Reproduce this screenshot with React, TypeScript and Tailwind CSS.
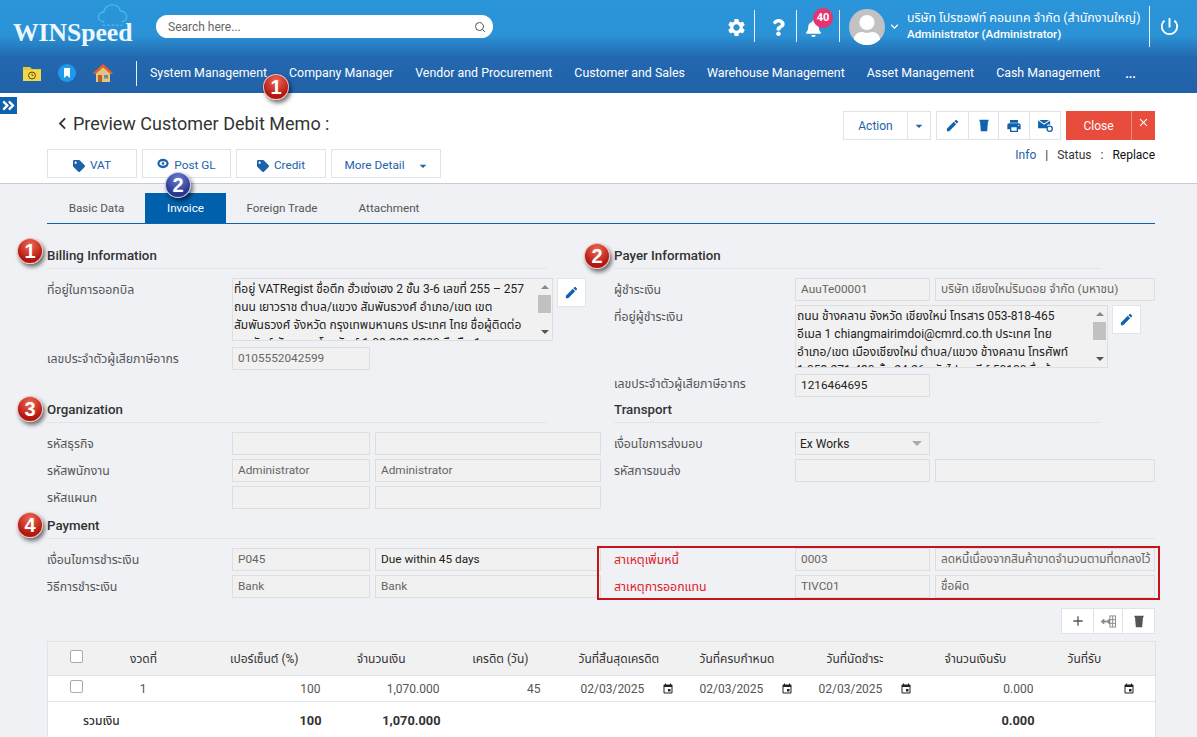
import { MdSettings, MdEdit, MdPrint, MdEvent, MdPowerSettingsNew, MdArrowDropDown, MdClose, MdAdd, MdExpandMore, MdChevronLeft } from "react-icons/md";
import { FaBell, FaQuestion, FaAngleDoubleRight, FaUser, FaTag } from "react-icons/fa";
import { Search } from "lucide-react";

const NAV = ["System Management", "Company Manager", "Vendor and Procurement", "Customer and Sales", "Warehouse Management", "Asset Management", "Cash Management"];

const ADDRESS_1 = [
  "ที่อยู่ VATRegist ชื่อตึก ฮั่วเซ่งเฮง 2 ชั้น 3-6 เลขที่ 255 – 257",
  "ถนน เยาวราช ตำบล/แขวง สัมพันธวงศ์ อำเภอ/เขต เขต",
  "สัมพันธวงศ์ จังหวัด กรุงเทพมหานคร ประเทศ ไทย ชื่อผู้ติดต่อ",
  "คุณรัตน์ สัญชาญ โทรศัพท์ 1-02-223-3200 มือถือ 1",
];
const ADDRESS_2 = [
  "ถนน ช้างคลาน จังหวัด เชียงใหม่ โทรสาร 053-818-465",
  "อีเมล 1 chiangmairimdoi@cmrd.co.th ประเทศ ไทย",
  "อำเภอ/เขต เมืองเชียงใหม่ ตำบล/แขวง ช้างคลาน โทรศัพท์",
  "1-053-271-430 ชั้น 24-26 รหัสไปรษณีย์ 50100 ชื่อผู้",
];

function Badge({ n, blue, className }: { n: number; blue?: boolean; className: string }) {
  return (
    <span
      className={`absolute z-20 flex h-[26px] w-[26px] items-center justify-center rounded-full border-[1.5px] border-white/70 text-[20px] leading-none font-bold text-white shadow-[2px_3px_4px_rgba(0,0,0,0.55)] font-['Liberation_Sans',sans-serif] ${
        blue
          ? "bg-[radial-gradient(circle_at_50%_25%,#6f7fd0,#27368f_70%)]"
          : "bg-[radial-gradient(circle_at_50%_25%,#ee6a55,#b3160f_70%)]"
      } ${className}`}
    >
      {n}
    </span>
  );
}

function Field({ value, dark, className = "" }: { value?: string; dark?: boolean; className?: string }) {
  return (
    <div className={`flex h-[23px] items-center overflow-hidden whitespace-nowrap border border-[#dcdfe0] bg-[#f1f1f1] px-[5px] text-[11.8px] ${dark ? "text-[#222]" : "text-[#666]"} ${className}`}>
      {value}
    </div>
  );
}

function Title({ text, className = "" }: { text: string; className?: string }) {
  return (
    <div className={`flex h-[25px] items-center border-b border-[#e2e4e8] pb-[1px] text-[13.3px] font-medium text-[#333] ${className}`}>
      {text}
    </div>
  );
}

function Label({ text, red }: { text: string; red?: boolean }) {
  return <div className={`pt-[2px] text-[12.3px] leading-[21px] ${red ? "text-[#e0202a]" : "text-[#555]"}`}>{text}</div>;
}

function TrashIcon({ className }: { className: string }) {
  return (
    <svg viewBox="0 0 12 15" className={className} fill="currentColor">
      <path d="M0.500 0.500 H11.500 V2.500 H10.800 L9.800 14.500 H2.200 L1.200 2.500 H0.500Z" />
    </svg>
  );
}

function AddressBox({ lines, width }: { lines: string[]; width: string }) {
  return (
    <div className="flex gap-[4px]">
      <div className={`flex h-[63px] overflow-hidden border border-[#dcdfe0] bg-[#f1f1f1] ${width}`}>
        <div className="min-w-0 flex-1 overflow-hidden py-[1px] pl-[1px] text-[12px] leading-[18px] text-[#222]">
          {lines.map(line => <div key={line} className="whitespace-nowrap">{line}</div>)}
        </div>
        <div className="flex w-[15px] shrink-0 flex-col items-center justify-between bg-[#f1f1f1] py-[6px]">
          <span className="h-0 w-0 border-x-[4px] border-b-[4px] border-x-transparent border-b-[#888]" />
          <span className="mb-[12px] mt-[1px] h-[18px] w-[13px] bg-[#c1c1c1]" />
          <span className="h-0 w-0 border-x-[4px] border-t-[4px] border-x-transparent border-t-[#555]" />
        </div>
      </div>
      <button className="flex h-[29px] w-[29px] items-center justify-center border border-[#e2e4e8] bg-white text-[#0f62ac]">
        <MdEdit size={15} />
      </button>
    </div>
  );
}

function OutlineButton({ children, className = "" }: { children: React.ReactNode; className?: string }) {
  return (
    <button className={`flex h-[29px] items-center justify-center gap-[5px] border border-[#dfe2e6] bg-white pt-[5px] text-[11.8px] text-[#1b62a8] ${className}`}>
      {children}
    </button>
  );
}

function CalendarCell({ date, pl, iconGap }: { date?: string; pl: string; iconGap: string }) {
  return (
    <td className={pl}>
      <div className="flex items-center">
        <span className="w-[62px]">{date}</span>
        <MdEvent size={12} className={`text-[#222] ${iconGap}`} />
      </div>
    </td>
  );
}

export default function App() {
  return (
    <div className="relative h-[737px] w-[1197px] overflow-hidden bg-[#eff1f5] font-['Roboto','Noto_Sans','Noto_Sans_Thai',sans-serif] text-[#333]">
      <header className="h-[93px] bg-[linear-gradient(180deg,#2b95d9_0%,#2b92d6_38%,#2368af_62%,#2161a8_100%)] text-white">
        <div className="flex h-[56px]">
          {/* logo */}
          <div className="relative h-full w-[156px] shrink-0">
            <svg viewBox="0 0 34 26" className="absolute left-[96px] top-[4px] h-[23px] w-[33px]" fill="none" stroke="#48b6ee" strokeWidth="1.6">
              <path d="M8 20 C3 20 1 17 1 14 C1 11 4 9 7 9.500 C8 4 12 1 17 1 C22 1 25 4 26 8 C30 8 33 11 33 14.500 C33 18 30 20 27 20" />
              <path d="M6 24 H28" strokeDasharray="3 2" />
            </svg>
            <span className="absolute left-[13px] top-[18px] font-['Liberation_Serif',serif] text-[25.600px] leading-[30px] font-bold text-[#eef7fd]">WINSpeed</span>
          </div>
          <div className="mt-[15px] flex h-[23px] w-[337px] items-center justify-between rounded-full bg-white pl-[12px] pr-[7px]">
            <span className="text-[12px] text-[#666]">Search here...</span>
            <Search size={12} className="text-[#555]" />
          </div>
          <div className="ml-auto flex items-start">
            <MdSettings size={21} className="mt-[17px]" />
            <span className="ml-[7px] mt-[10px] h-[32px] w-px bg-white/90" />
            <FaQuestion size={17} className="ml-[15px] mt-[19px]" />
            <span className="ml-[9px] mt-[10px] h-[32px] w-px bg-white/90" />
            <div className="relative ml-[8px] mt-[20px]">
              <FaBell size={17} />
              <span className="absolute left-[8px] top-[-12px] flex h-[20px] w-[20px] items-center justify-center rounded-full bg-[#e8336f] text-[11px] font-bold">40</span>
            </div>
            <span className="ml-[17px] mt-[10px] h-[32px] w-px bg-white/90" />
            <div className="ml-[9px] mt-[9px] flex h-[36px] w-[36px] items-end justify-center overflow-hidden rounded-full bg-[#c2c2c2]">
              <FaUser size={30} className="text-white" />
            </div>
            <MdExpandMore size={15} className="ml-[2px] mt-[19px]" />
            <div className="ml-[5px] mt-[10px] w-[234px] whitespace-nowrap text-[12.400px] leading-[16px]">
              <div>บริษัท โปรซอฟท์ คอมเทค จำกัด (สำนักงานใหญ่)</div>
              <div className="text-[11.700px] font-medium">Administrator (Administrator)</div>
            </div>
            <span className="ml-[8px] mt-[6px] h-[41px] w-px bg-white/90" />
            <MdPowerSettingsNew size={23} className="ml-[8px] mt-[15px] mr-[16px]" />
          </div>
        </div>
        <nav className="flex h-[37px] items-center pb-[3px] pl-[23px] text-[12.380px]">
          <svg viewBox="0 0 18 16" className="h-[16px] w-[18px]">
            <path d="M0 2 H7 L9 4 H18 V16 H0Z" fill="#e8c93a" />
            <path d="M0 5 H18 V16 H0Z" fill="#f4d84a" />
            <circle cx="9" cy="10.500" r="3.500" fill="none" stroke="#5a4a10" strokeWidth="1" />
            <path d="M9 8.500 V10.500 H10.500" fill="none" stroke="#5a4a10" strokeWidth="0.8" />
          </svg>
          <svg viewBox="0 0 18 18" className="ml-[17px] h-[18px] w-[18px]">
            <circle cx="9" cy="9" r="9" fill="#1d9bea" />
            <path d="M6 4 H12 V14 L9 11.500 L6 14Z" fill="#fff" />
          </svg>
          <svg viewBox="0 0 20 20" className="ml-[17px] h-[20px] w-[20px]">
            <path d="M3 9 V19 H17 V9 L10 3Z" fill="#e9c27e" />
            <path d="M0 10 L10 1 L20 10 L18 11.500 L10 4.500 L2 11.500Z" fill="#e2622a" />
            <rect x="5" y="12" width="4" height="7" fill="#a8662c" />
            <rect x="11" y="12" width="4" height="3.500" fill="#5d8fb0" />
          </svg>
          <span className="ml-[23px] mr-[13px] h-[25px] w-px bg-white/90" />
          <div className="flex gap-[22px]">
            {NAV.map(item => <span key={item} className="whitespace-nowrap">{item}</span>)}
          </div>
          <span className="ml-[25px] pt-[3px] font-bold">...</span>
        </nav>
      </header>

      <Badge n={1} className="left-[263px] top-[74px]" />

      <section className="relative flex h-[91px] justify-between border-b border-[#c9cbce] bg-white pl-[47px] pr-[42px]">
        <button className="absolute left-0 top-[4px] flex h-[17px] w-[17px] items-center justify-center bg-[#0f62ac] text-white">
          <FaAngleDoubleRight size={15} />
        </button>
        <div>
          <div className="mt-[18px] flex h-[24px] items-center text-[#333]">
            <MdChevronLeft size={23} className="ml-[4px]" />
            <h1 className="ml-[-1px] text-[18px]">Preview Customer Debit Memo :</h1>
          </div>
          <div className="mt-[14px] flex gap-[5px]">
            <OutlineButton className="w-[90px]"><FaTag size={12} />VAT</OutlineButton>
            <OutlineButton className="w-[89px]">
              <svg viewBox="0 0 14 12" className="mb-[6px] h-[11px] w-[12px]">
                <ellipse cx="7" cy="6" rx="6.500" ry="5.500" fill="#1b62a8" />
                <ellipse cx="7" cy="6" rx="4" ry="2.500" fill="#fff" />
                <circle cx="7" cy="6" r="1.500" fill="#1b62a8" />
              </svg>
              Post GL
            </OutlineButton>
            <OutlineButton className="w-[90px]"><FaTag size={12} />Credit</OutlineButton>
            <OutlineButton className="w-[110px] gap-[10px] pl-[3px]">More Detail<MdArrowDropDown size={16} /></OutlineButton>
          </div>
        </div>
        <div className="flex flex-col items-end pt-[18px]">
          <div className="flex">
            <div className="flex h-[29px] border border-[#dfe2e6] bg-white text-[12px] text-[#1b62a8]">
              <span className="flex w-[64px] items-center justify-center border-r border-[#dfe2e6]">Action</span>
              <span className="flex w-[22px] items-center justify-center"><MdArrowDropDown size={16} /></span>
            </div>
            <div className="ml-[5px] flex h-[29px] border border-[#dfe2e6] bg-white text-[#0f62ac]">
              <span className="flex w-[32px] items-center justify-center border-r border-[#dfe2e6]"><MdEdit size={15} /></span>
              <span className="flex w-[30px] items-center justify-center border-r border-[#dfe2e6]"><TrashIcon className="h-[13px] w-[10px]" /></span>
              <span className="flex w-[31px] items-center justify-center border-r border-[#dfe2e6]"><MdPrint size={16} /></span>
              <span className="flex w-[30px] items-center justify-center">
                <svg viewBox="0 0 16 14" className="h-[13px] w-[15px]" fill="currentColor">
                  <path d="M0 1 H13 V6 H10 V10 H0Z" />
                  <path d="M0 1 L6.500 5.500 L13 1" fill="none" stroke="#fff" strokeWidth="1.200" />
                  <circle cx="12.500" cy="10.500" r="2.800" fill="none" stroke="currentColor" strokeWidth="1.400" />
                </svg>
              </span>
            </div>
            <button className="ml-[5px] flex h-[29px] bg-[#e74c3c] text-[12px] text-white">
              <span className="flex w-[66px] items-center justify-center border-r border-[#f08a7e]">Close</span>
              <span className="flex w-[23px] items-start justify-center pt-[5px]"><MdClose size={13} /></span>
            </button>
          </div>
          <div className="mt-[6px] flex items-center text-[12px] text-[#333]">
            <span className="text-[#1b62a8]">Info</span>
            <span className="mx-[9px]">|</span>
            <span>Status</span>
            <span className="mx-[9px]">:</span>
            <span className="text-[#111]">Replace</span>
          </div>
        </div>
      </section>

      <Badge n={2} blue className="left-[165px] top-[172px]" />

      <main className="pl-[47px] pr-[42px]">
        <div className="mt-[9px] flex h-[31px] border-b border-[#0f62ac] pt-[1px] text-[11.700px] text-[#555]">
          <span className="flex w-[98px] items-center justify-center pl-[1px]">Basic Data</span>
          <span className="mt-[-1px] flex w-[81px] items-center justify-center bg-[#0060ac] pt-[1px] text-white">Invoice</span>
          <span className="flex w-[112px] items-center justify-center">Foreign Trade</span>
          <span className="flex w-[102px] items-center justify-center">Attachment</span>
        </div>

        <div className="relative grid grid-cols-[567px_541px] pt-[20px]">
          <Badge n={1} className="left-[-30px] top-[14px]" />
          <Badge n={2} className="left-[537px] top-[19px]" />
          <Badge n={3} className="left-[-30px] top-[172px]" />
          <Badge n={4} className="left-[-30px] top-[288px]" />

          {/* billing */}
          <div className="h-[154px]">
            <Title text="Billing Information" className="w-[500px]" />
            <div className="mt-[9px] grid grid-cols-[185px_1fr] gap-y-[6px]">
              <Label text="ที่อยู่ในการออกบิล" />
              <AddressBox lines={ADDRESS_1} width="w-[321px]" />
              <Label text="เลขประจำตัวผู้เสียภาษีอากร" />
              <Field value="0105552042599" className="w-[138px]" />
            </div>
          </div>

          {/* payer */}
          <div className="h-[154px]">
            <Title text="Payer Information" className="w-[487px]" />
            <div className="mt-[9px] grid grid-cols-[181px_1fr] gap-y-[4px]">
              <Label text="ผู้ชำระเงิน" />
              <div className="flex gap-[5px]">
                <Field value="AuuTe00001" className="w-[135px]" />
                <Field value="บริษัท เชียงใหม่ริมดอย จำกัด (มหาชน)" className="w-[220px]" />
              </div>
              <Label text="ที่อยู่ผู้ชำระเงิน" />
              <AddressBox lines={ADDRESS_2} width="w-[313px]" />
              <Label text="เลขประจำตัวผู้เสียภาษีอากร" />
              <Field value="1216464695" dark className="mt-[2px] w-[135px]" />
            </div>
          </div>

          {/* organization */}
          <div className="h-[116px]">
            <Title text="Organization" className="w-[500px]" />
            <div className="mt-[9px] grid grid-cols-[185px_138px_231px] gap-y-[4px]">
              <Label text="รหัสธุรกิจ" />
              <Field />
              <Field className="ml-[5px]" />
              <Label text="รหัสพนักงาน" />
              <Field value="Administrator" />
              <Field value="Administrator" className="ml-[5px]" />
              <Label text="รหัสแผนก" />
              <Field />
              <Field className="ml-[5px]" />
            </div>
          </div>

          {/* transport */}
          <div className="h-[116px]">
            <Title text="Transport" className="w-[487px]" />
            <div className="mt-[9px] grid grid-cols-[181px_135px_225px] gap-y-[4px]">
              <Label text="เงื่อนไขการส่งมอบ" />
              <div className="flex h-[23px] items-center justify-between border border-[#dcdfe0] bg-[#f1f1f1] pl-[4px] pr-[7px] text-[12px] text-[#222]">
                Ex Works
                <span className="h-0 w-0 border-x-[5px] border-t-[5px] border-x-transparent border-t-[#aaa]" />
              </div>
              <div />
              <Label text="รหัสการขนส่ง" />
              <Field />
              <Field className="ml-[5px]" />
            </div>
          </div>

          {/* payment */}
          <div className="col-span-2 h-[25px]"><Title text="Payment" /></div>
          <div className="mt-[9px] grid grid-cols-[185px_138px_231px] gap-y-[4px]">
            <Label text="เงื่อนไขการชำระเงิน" />
            <Field value="P045" />
            <Field value="Due within 45 days" dark className="ml-[5px]" />
            <Label text="วิธีการชำระเงิน" />
            <Field value="Bank" />
            <Field value="Bank" className="ml-[5px]" />
          </div>
          <div className="relative mt-[9px] grid grid-cols-[181px_135px_225px] gap-y-[4px]">
            <span className="pointer-events-none absolute left-[-17px] right-[-5px] top-[-2px] bottom-[-2px] border-2 border-[#c5121b]" />
            <Label text="สาเหตุเพิ่มหนี้" red />
            <Field value="0003" />
            <Field value="ลดหนี้เนื่องจากสินค้าขาดจำนวนตามที่ตกลงไว้" className="ml-[5px]" />
            <Label text="สาเหตุการออกแทน" red />
            <Field value="TIVC01" />
            <Field value="ชื่อผิด" className="ml-[5px]" />
          </div>
        </div>

        <div className="mt-[10px] flex justify-end">
          <div className="flex h-[26px] border border-[#dfe2e6] bg-white text-[#555]">
            <span className="flex w-[32px] items-center justify-center border-r border-[#dfe2e6]"><MdAdd size={16} /></span>
            <span className="flex w-[29px] items-center justify-center border-r border-[#dfe2e6]">
              <svg viewBox="0 0 18 14" className="h-[13px] w-[17px]" fill="none" stroke="#888" strokeWidth="1">
                <path d="M1 7 L4 4.500 V9.500Z" fill="#888" />
                <path d="M4 7 H7" strokeWidth="2" />
                <path d="M7 7 L10 4.500 V9.500Z" fill="#888" />
                <rect x="10.500" y="1" width="6" height="12" />
                <path d="M10.500 5 H16.500 M10.500 9 H16.500 M13.500 1 V13" />
              </svg>
            </span>
            <span className="flex w-[31px] items-center justify-center"><TrashIcon className="h-[13px] w-[10px]" /></span>
          </div>
        </div>

        <table className="mt-[7px] w-[1108px] table-fixed border-collapse border border-[#dfe2e6] bg-white text-[12px] text-[#555]">
          <colgroup>
            <col className="w-[49px]" />
            <col className="w-[94px]" />
            <col className="w-[141px]" />
            <col className="w-[118px]" />
            <col className="w-[101px]" />
            <col className="w-[140px]" />
            <col className="w-[119px]" />
            <col className="w-[119px]" />
            <col className="w-[115px]" />
            <col className="w-[112px]" />
          </colgroup>
          <thead>
            <tr className="h-[34px] border-b border-[#dfe2e6] bg-[#f1f1f1] font-normal text-[#333]">
              <th className="pl-[22px] text-left font-normal"><span className="mb-[4px] block h-[13px] w-[13px] rounded-[2px] border border-[#aaa] bg-white" /></th>
              <th className="text-center font-normal">งวดที่</th>
              <th className="pr-[33px] text-right font-normal">เปอร์เซ็นต์ (%)</th>
              <th className="pr-[44px] text-right font-normal">จำนวนเงิน</th>
              <th className="pr-[22px] text-right font-normal">เครดิต (วัน)</th>
              <th className="pl-[28px] text-left font-normal">วันที่สิ้นสุดเครดิต</th>
              <th className="pl-[9px] text-left font-normal">วันที่ครบกำหนด</th>
              <th className="pl-[17px] text-left font-normal">วันที่นัดชำระ</th>
              <th className="pl-[16px] text-left font-normal">จำนวนเงินรับ</th>
              <th className="pl-[24px] text-left font-normal">วันที่รับ</th>
            </tr>
          </thead>
          <tbody>
            <tr className="h-[26px] border-b border-[#dfe2e6]">
              <td className="pl-[22px]"><span className="mb-[4px] block h-[13px] w-[13px] rounded-[2px] border border-[#aaa] bg-white" /></td>
              <td className="pr-[1px] text-center">1</td>
              <td className="pr-[11px] text-right">100</td>
              <td className="pr-[10px] text-right">1,070.000</td>
              <td className="pr-[10px] text-right">45</td>
              <CalendarCell date="02/03/2025" pl="pl-[30px]" iconGap="ml-[19px]" />
              <CalendarCell date="02/03/2025" pl="pl-[9px]" iconGap="ml-[19px]" />
              <CalendarCell date="02/03/2025" pl="pl-[9px]" iconGap="ml-[19px]" />
              <td className="pr-[10px] text-right">0.000</td>
              <CalendarCell pl="pl-[17px]" iconGap="" />
            </tr>
            <tr className="h-[38px] text-[12.800px] font-bold text-[#333]">
              <td colSpan={2} className="pl-[35px] text-[12px] font-medium">รวมเงิน</td>
              <td className="pr-[10px] text-right">100</td>
              <td className="pr-[9px] text-right">1,070.000</td>
              <td colSpan={4} />
              <td className="pr-[9px] text-right">0.000</td>
              <td />
            </tr>
          </tbody>
        </table>
      </main>
    </div>
  );
}
